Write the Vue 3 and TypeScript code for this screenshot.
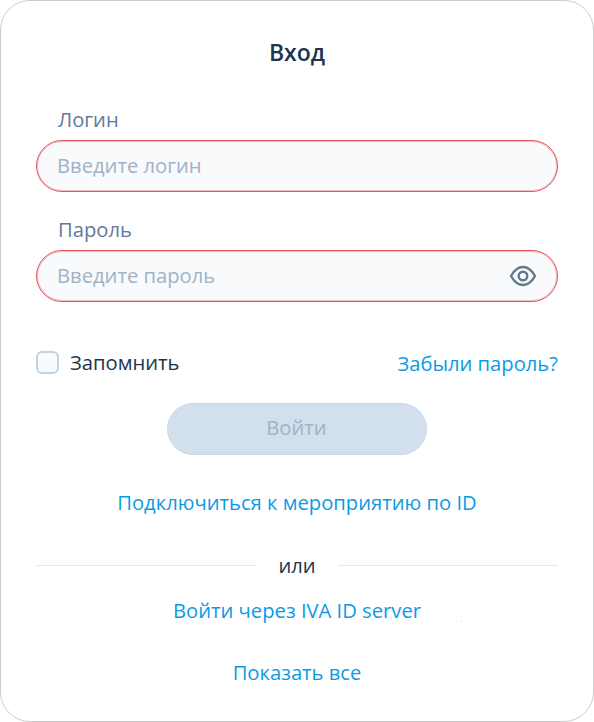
<script setup lang="ts">
const title: string = 'Вход'
</script>

<template>
  <div class="card">
    <h1 class="title">{{ title }}</h1>
    <label class="label first">Логин</label>
    <div class="field"><span class="ph">Введите логин</span></div>
    <label class="label second">Пароль</label>
    <div class="field">
      <span class="ph">Введите пароль</span>
      <svg class="eye" width="28" height="28" viewBox="0 0 28 28" fill="none" stroke="#64788f" stroke-width="2.4">
        <path d="M2 14C5 8.600 9 5 14 5s9 3.600 12 9c-3 5.400-7 9-12 9S5 19.400 2 14z" stroke-linejoin="round" />
        <circle cx="14" cy="14" r="4.300" />
      </svg>
    </div>
    <div class="options">
      <div class="remember"><span class="box"></span><span class="rem-text">Запомнить</span></div>
      <a class="link forgot">Забыли пароль?</a>
    </div>
    <div class="btn-row"><button class="btn">Войти</button></div>
    <a class="link center connect">Подключиться к мероприятию по ID</a>
    <div class="divider"><span class="line"></span><span class="or">или</span><span class="line"></span></div>
    <a class="link center server">Войти через IVA ID server</a>
    <a class="link center all">Показать все</a>
    <i class="speck"></i>
  </div>
</template>

<style>
html, body { margin: 0; background: #fff; }
</style>

<style scoped>
.card {
  box-sizing: border-box;
  position: relative;
  width: 594px;
  height: 722px;
  padding: 0 35px;
  border: 1px solid #cccccc;
  border-radius: 30px;
  background: #fff;
  font-family: "Open Sans", "Noto Sans", sans-serif;
  font-size: 20.2px;
  display: flex;
  flex-direction: column;
}
.title {
  margin: 36px 0 0;
  font-size: 23px;
  line-height: 30px;
  font-weight: 600;
  color: #1d3550;
  text-align: center;
}
.label {
  padding-left: 22px;
  line-height: 28px;
  color: #64799a;
}
.label.first { margin-top: 38px; }
.label.second { margin-top: 23px; }
.field {
  box-sizing: border-box;
  height: 52px;
  margin-top: 7px;
  padding: 0 20px 2px 20px;
  border: 1px solid #e5525f;
  box-shadow: inset 0 0 0 1px rgba(229, 82, 95, 0.35);
  border-radius: 26px;
  background: #f8fafc;
  display: flex;
  align-items: center;
  justify-content: space-between;
}
.ph { color: #a0b2c8; }
.eye { margin: 2px 0 0 0; }
.options {
  margin-top: 46px;
  display: flex;
  justify-content: space-between;
  align-items: flex-start;
}
.remember { display: flex; align-items: center; gap: 11px; }
.box {
  box-sizing: border-box;
  width: 23px;
  height: 23px;
  border: 2px solid #bdd3e8;
  border-radius: 6px;
  background: #f8fafc;
}
.rem-text { color: #1d3550; line-height: 28px; }
.link { color: #0b9be6; line-height: 28px; }
.forgot { margin-top: 1px; }
.center { text-align: center; }
.btn-row { display: flex; justify-content: center; margin-top: 26px; }
.btn {
  box-sizing: border-box;
  width: 260px;
  height: 52px;
  padding: 0 1px 5px 0;
  border: 1px solid #c9d8e8;
  border-radius: 26px;
  background: #d2dfec;
  color: #a0b2c8;
  font: inherit;
}
.connect { margin-top: 33px; }
.divider {
  margin-top: 35px;
  display: flex;
  align-items: center;
  gap: 22px;
}
.line { flex: 1; height: 1px; background: #e2e8ee; }
.or { color: #1d3550; line-height: 28px; }
.server { margin-top: 17px; }
.all { margin-top: 34px; }
.speck {
  position: absolute;
  left: 460px;
  top: 620px;
  width: 1px;
  height: 1px;
  background: #9fdcf7;
}
</style>
